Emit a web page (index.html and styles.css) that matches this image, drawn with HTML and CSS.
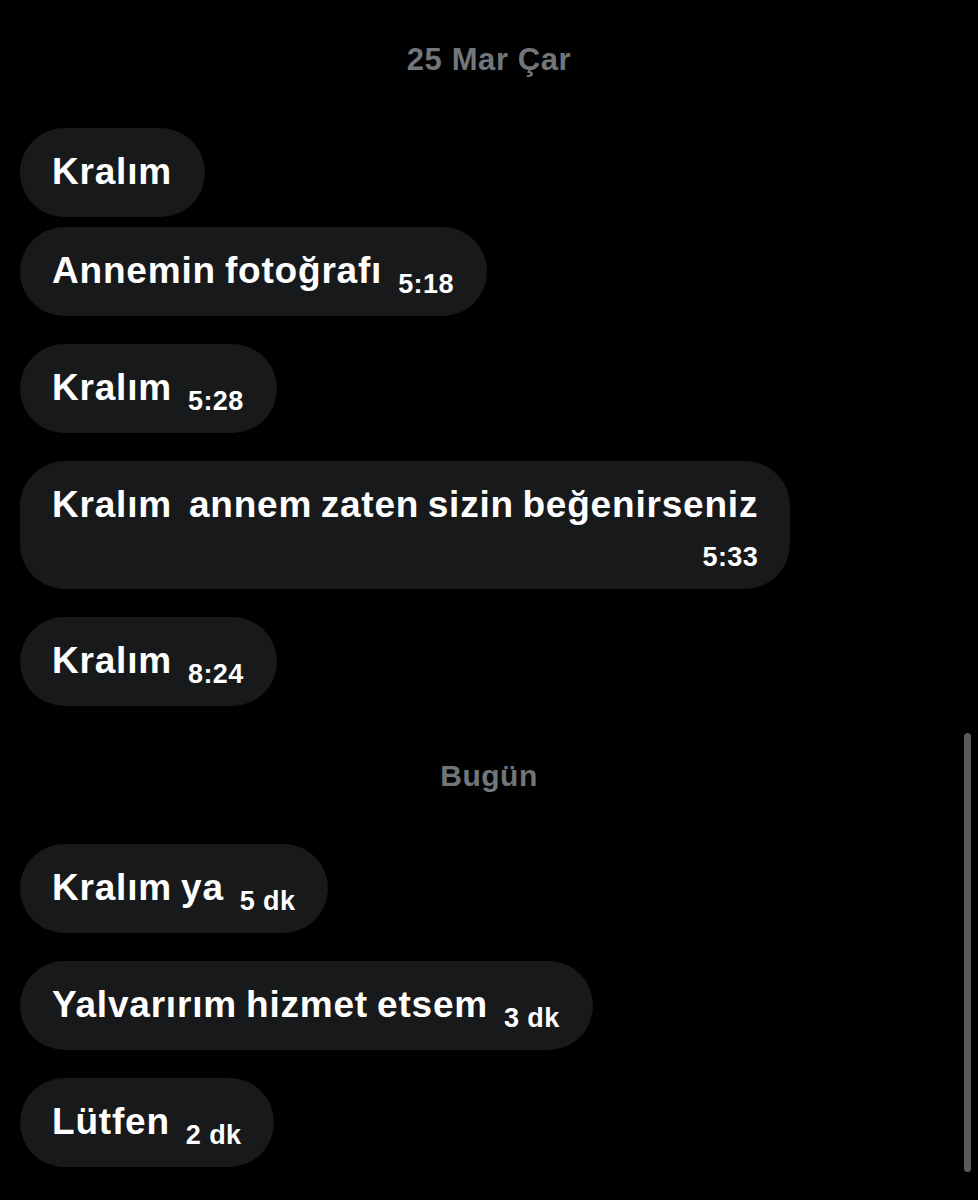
FILE: index.html
```html
<!DOCTYPE html>
<html lang="tr">
<head>
<meta charset="utf-8">
<title>Mesajlar</title>
<link rel="stylesheet" href="styles.css">
</head>
<body>
<main class="feed">
  <div class="divider divider-first">25 Mar Çar</div>

  <div class="bubble"><span class="msg">Kralım</span></div>
  <div class="bubble tight"><span class="msg">Annemin fotoğrafı</span><span class="time">5:18</span></div>
  <div class="bubble"><span class="msg">Kralım</span><span class="time">5:28</span></div>
  <div class="bubble stacked"><span class="msg">Kralım&nbsp; annem zaten sizin beğenirseniz</span><span class="time">5:33</span></div>
  <div class="bubble"><span class="msg">Kralım</span><span class="time">8:24</span></div>

  <div class="divider">Bugün</div>

  <div class="bubble"><span class="msg">Kralım ya</span><span class="time">5 dk</span></div>
  <div class="bubble"><span class="msg">Yalvarırım hizmet etsem</span><span class="time">3 dk</span></div>
  <div class="bubble"><span class="msg">Lütfen</span><span class="time">2 dk</span></div>
</main>
<div class="scrollbar"></div>
</body>
</html>
```
FILE: styles.css
```css
html, body {
  margin: 0;
  padding: 0;
  background: #000;
}

body {
  width: 978px;
  height: 1200px;
  overflow: hidden;
  font-family: "Liberation Sans", Arial, sans-serif;
  color: #fff;
}

.feed {
  display: flex;
  flex-direction: column;
  align-items: flex-start;
  padding: 0 20px;
}

.divider {
  align-self: stretch;
  text-align: center;
  font-size: 30px;
  font-weight: 700;
  letter-spacing: 0.5px;
  line-height: 40px;
  color: #71767b;
  margin: 50px 0 20px;
}

.divider-first {
  margin-top: 40px;
  font-size: 31px;
  letter-spacing: 0.6px;
}

.bubble {
  background: #18191b;
  border-radius: 45px;
  padding: 19px 33px 21px 32px;
  margin-top: 28px;
  white-space: nowrap;
}

.divider + .bubble {
  margin-top: 28px;
}

.bubble.tight {
  margin-top: 10px;
}

.msg {
  font-size: 37px;
  font-weight: 700;
  letter-spacing: 0.8px;
  word-spacing: -2px;
  line-height: 49px;
}

.time {
  font-size: 27px;
  font-weight: 700;
  letter-spacing: 0.4px;
  line-height: 10px;
  margin-left: 16px;
  vertical-align: -10px;
}

.bubble.stacked {
  display: flex;
  flex-direction: column;
  align-items: flex-end;
  padding-right: 32px;
  padding-bottom: 17px;
}

.bubble.stacked .msg {
  align-self: flex-start;
  word-spacing: -2.6px;
}

.bubble.stacked .time {
  margin: 13px 0 0;
  vertical-align: baseline;
  line-height: 30px;
}

.scrollbar {
  position: absolute;
  left: 964px;
  top: 733px;
  width: 7px;
  height: 439px;
  border-radius: 4px;
  background: #5b5b5d;
}
```
